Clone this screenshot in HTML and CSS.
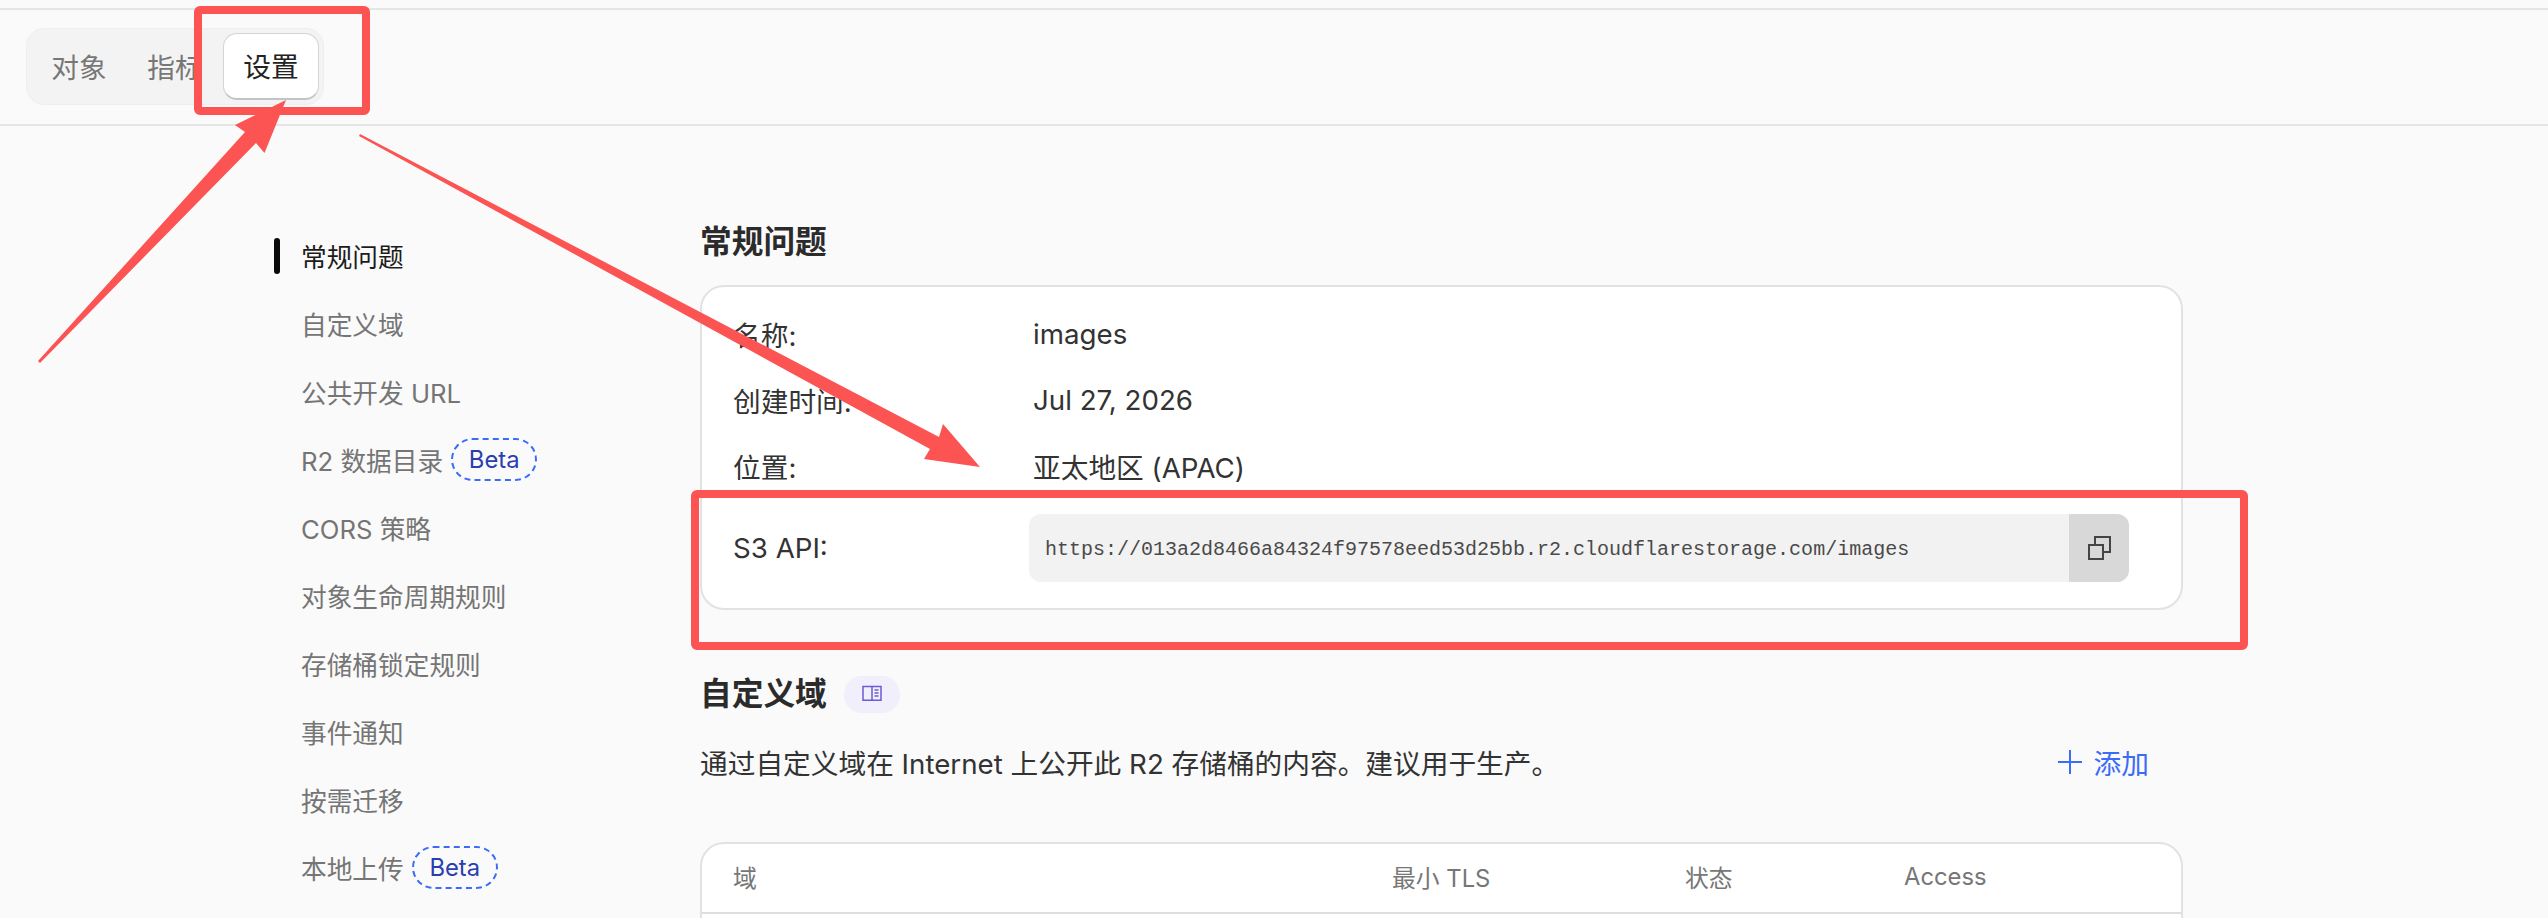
FILE: index.html
```html
<!DOCTYPE html>
<html lang="zh-CN">
<head>
<meta charset="utf-8">
<title>images - 设置</title>
<link rel="stylesheet" href="styles.css">
</head>
<body>
<div class="page">
  <header class="topbar">
    <div class="tabs">
      <span class="tab">对象</span>
      <span class="tab">指标</span>
      <span class="tab tab-active">设置</span>
    </div>
  </header>
  <div class="layout">
    <nav class="side">
      <a class="side-item side-active">常规问题</a>
      <a class="side-item">自定义域</a>
      <a class="side-item">公共开发 URL</a>
      <a class="side-item">R2 数据目录<span class="beta">Beta</span></a>
      <a class="side-item">CORS 策略</a>
      <a class="side-item">对象生命周期规则</a>
      <a class="side-item">存储桶锁定规则</a>
      <a class="side-item">事件通知</a>
      <a class="side-item">按需迁移</a>
      <a class="side-item">本地上传<span class="beta">Beta</span></a>
    </nav>
    <main class="content">
      <h2 class="title">常规问题</h2>
      <section class="card general">
        <div class="row"><span class="label">名称:</span><span>images</span></div>
        <div class="row"><span class="label">创建时间:</span><span>Jul 27, 2026</span></div>
        <div class="row"><span class="label">位置:</span><span>亚太地区 (APAC)</span></div>
        <div class="row row-api">
          <span class="label">S3 API:</span>
          <div class="copy-field">
            <code class="url">https://013a2d8466a84324f97578eed53d25bb.r2.cloudflarestorage.com/images</code>
            <span class="copy-btn">
              <svg class="copy-icon" viewBox="0 0 23 24" fill="none" stroke="#444" stroke-width="2"><rect x="1" y="9" width="14" height="14"/><path d="M7 9V1h15v15h-7"/></svg>
            </span>
          </div>
        </div>
      </section>
      <div class="title-row">
        <h2 class="title">自定义域</h2>
        <span class="doc-pill">
          <svg class="book-icon" viewBox="0 0 20 20" fill="none" stroke="#6a5bd6" stroke-width="1.5"><path d="M1 2.5h8.500c.4 0 .5.3.5.5v14c0-.5-.3-.8-.8-.8H1zM19 2.500h-8.500c-.4 0-.5.3-.5.5v14c0-.5.300-.8.800-.8H19z"/><path d="M12.500 6h4M12.500 9h4M12.500 12h4" stroke-width="1.300"/></svg>
        </span>
      </div>
      <div class="desc-row">
        <p class="desc">通过自定义域在 Internet 上公开此 R2 存储桶的内容。建议用于生产。</p>
        <a class="add">
          <svg class="plus-icon" viewBox="0 0 24 24" stroke="#3b6cf6" stroke-width="2"><path d="M12 0v24M0 12h24"/></svg>添加
        </a>
      </div>
      <section class="card table">
        <div class="thead">
          <span>域</span>
          <span>最小 TLS</span>
          <span>状态</span>
          <span>Access</span>
        </div>
        <div class="tbody"></div>
      </section>
    </main>
  </div>
  <svg class="marks" viewBox="0 0 2548 918" width="2548" height="918">
    <rect class="mark-box" x="198" y="10" width="168" height="101" rx="2"/>
    <rect class="mark-box" x="695" y="494" width="1549" height="152" rx="2"/>
    <polygon class="mark-arrow" points="38,361 40,363 256,143 264.500,153 286,100 235,125 245,132"/>
    <polygon class="mark-arrow" points="359,136 360,134 939,437 943,424 980,467 924,459 930,449"/>
  </svg>
</div>
</body>
</html>
```
FILE: styles.css
```css
* { box-sizing: border-box; }
html, body { margin: 0; height: 918px; overflow: hidden; }
body {
  background: #fafafa;
  color: #333;
  font-family: Inter, "Noto Sans CJK SC", sans-serif;
  font-size: 27.700px;
}
.page { position: relative; width: 2548px; height: 918px; overflow: hidden; padding-top: 8px; }

.topbar {
  height: 118px;
  border-top: 2px solid #e5e5e5;
  border-bottom: 2px solid #e5e5e5;
  padding: 18px 0 0 26px;
}
.tabs {
  display: flex;
  width: 298px;
  height: 77px;
  padding: 4px 6px 4px 4px;
  background: #f3f3f3;
  border: 1px solid #eeeeee;
  border-radius: 18px;
}
.tab {
  flex: 0 0 96px;
  display: flex;
  align-items: center;
  justify-content: center;
  padding-bottom: 2px;
  color: #777;
  font-size: 27.700px;
}
.tab-active {
  flex: 0 0 96px;
  background: #fff;
  color: #222;
  border: 1px solid #d4d4d4;
  border-bottom: 2px solid #c4c4c4;
  border-radius: 14px;
}

.layout { display: grid; grid-template-columns: 700px 1483px; padding-top: 96px; }

.side { padding-left: 274px; }
.side-item {
  position: relative;
  display: flex;
  align-items: center;
  height: 68px;
  padding: 0 0 2px 27px;
  color: #757575;
  font-size: 25.700px;
  white-space: nowrap;
}
.side-active { color: #1c1c1c; }
.side-active::before {
  content: "";
  position: absolute;
  left: 0;
  top: 16px;
  width: 6px;
  height: 36px;
  border-radius: 3px;
  background: #0a0a0a;
}
.beta {
  display: flex;
  align-items: center;
  justify-content: center;
  width: 86px;
  height: 43px;
  margin-left: 8px;
  border: 2px dashed #3b6cf6;
  border-radius: 22px;
  color: #2b3eb0;
  font-size: 23.800px;
}

.title { margin: 0; font-size: 31.700px; line-height: 40px; font-weight: 700; color: #2b2b2b; }
.card { background: #fff; border: 2px solid #e2e2e2; border-radius: 24px; }
.general { height: 325px; margin-top: 23px; padding: 15px 51px 0 31px; }
.row { display: flex; align-items: center; height: 66px; padding-bottom: 2px; }
.label { flex: 0 0 300px; }
.row-api { height: 68px; margin-top: 14px; padding-bottom: 0; }
.copy-field {
  display: flex;
  align-items: center;
  width: 1100px;
  height: 68px;
  margin-left: -4px;
  background: #f2f2f2;
  border-radius: 12px;
  overflow: hidden;
}
.url {
  flex: 1;
  padding: 2px 0 0 16px;
  font-family: "Liberation Mono", monospace;
  font-size: 20px;
  color: #4a4a4a;
}
.copy-btn {
  display: flex;
  align-items: center;
  justify-content: center;
  width: 60px;
  height: 100%;
  background: #d8d8d8;
}
.copy-icon { width: 23px; height: 24px; }

.title-row { display: flex; align-items: center; gap: 17px; margin-top: 64px; }
.doc-pill {
  display: flex;
  align-items: center;
  justify-content: center;
  width: 56px;
  height: 37px;
  border-radius: 18px;
  background: #f2effc;
}
.book-icon { width: 20px; height: 20px; }

.desc-row {
  display: flex;
  align-items: center;
  justify-content: space-between;
  height: 40px;
  margin-top: 29px;
  padding-right: 34px;
}
.desc { margin: 0 0 2px; color: #333; }
.add { display: flex; align-items: center; gap: 12px; margin-bottom: 2px; color: #3b6cf6; font-size: 27.700px; }
.plus-icon { width: 24px; height: 24px; }

.table { margin-top: 59px; height: 200px; }
.thead {
  display: grid;
  grid-template-columns: 659px 293px 219px 1fr;
  align-items: center;
  height: 70px;
  padding: 0 0 4px 31px;
  border-bottom: 2px solid #dedede;
  color: #777;
  font-size: 23.800px;
}

.marks { position: absolute; left: 0; top: 0; pointer-events: none; }
.mark-box { fill: none; stroke: #fc5353; stroke-width: 8; }
.mark-arrow { fill: #fc5353; }
```
